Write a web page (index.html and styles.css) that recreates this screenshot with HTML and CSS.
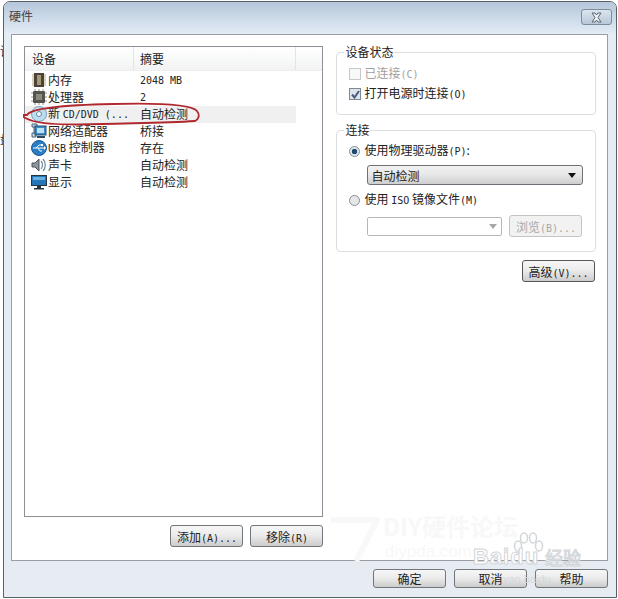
FILE: index.html
```html
<!DOCTYPE html>
<html lang="zh">
<head>
    <meta charset="UTF-8">
    <title>硬件</title>
    <link rel="stylesheet" href="styles.css">
</head>
<body>

    <span class="edge-text edge-one">语</span>
    <span class="edge-text edge-two">盘</span>

    <div class="window">
        <div class="titlebar">
            <span class="title">硬件</span>
            <span class="close">
                <svg width="13" height="11" viewBox="0 0 13 11"><path d="M2 1l3 0 1.500 2 1.500-2 3 0-3 4.500 3 4.500-3 0-1.500-2-1.500 2-3 0 3-4.500z" fill="#eef2f6" stroke="#5c6670"/></svg>
            </span>
        </div>

        <div class="panel">
            <div class="left-col">
                <div class="device-list">
                    <div class="list-head">
                        <span class="col-device">设备</span>
                        <span class="col-summary">摘要</span>
                        <span class="col-rest"></span>
                    </div>
                    <div class="row">
                        <span class="col-device">
                            <svg class="icon" viewBox="0 0 16 16"><rect x="3" y="1" width="10" height="14" fill="#4a4438"/><rect x="6" y="3" width="4" height="10" fill="#a89878"/><path d="M1 3h2M1 5h2M1 7h2M1 9h2M1 11h2M1 13h2M13 3h2M13 5h2M13 7h2M13 9h2M13 11h2M13 13h2" stroke="#b9a878"/></svg>
                            <span class="label">内存</span>
                        </span>
                        <span class="col-summary"><span class="lat">2048 MB</span></span>
                    </div>
                    <div class="row">
                        <span class="col-device">
                            <svg class="icon" viewBox="0 0 16 16"><rect x="2" y="2" width="12" height="12" rx="1" fill="#55554e"/><rect x="5" y="5" width="6" height="6" fill="#8a8a7c"/><path d="M4 0v2M8 0v2M12 0v2M4 14v2M8 14v2M12 14v2M0 4h2M0 8h2M0 12h2M14 4h2M14 8h2M14 12h2" stroke="#98988c"/></svg>
                            <span class="label">处理器</span>
                        </span>
                        <span class="col-summary"><span class="lat">2</span></span>
                    </div>
                    <div class="row row-selected">
                        <span class="col-device">
                            <svg class="icon" viewBox="0 0 16 16"><circle cx="8" cy="8" r="7.500" fill="#bcdcf0" stroke="#7d9fb8"/><path d="M3 5a6 6 0 0 1 5-3v6z" fill="#eaf6fc"/><circle cx="8" cy="8" r="2.500" fill="#f4f8fa" stroke="#5f89a8"/></svg>
                            <span class="label">新 <span class="lat">CD/DVD (...</span></span>
                        </span>
                        <span class="col-summary">自动检测</span>
                    </div>
                    <div class="row">
                        <span class="col-device">
                            <svg class="icon" viewBox="0 0 16 16"><path d="M1 1h5v3H1zM1 10h4v4H1z" fill="#c8d8e4" stroke="#44627c"/><path d="M3 4v6" stroke="#44627c"/><rect x="4" y="3" width="11" height="9" fill="#3a8ccc" stroke="#2a4c68"/><rect x="6" y="5" width="7" height="5" fill="#bfe2f6"/><path d="M6 14h8" stroke="#2a4c68" stroke-width="2"/></svg>
                            <span class="label">网络适配器</span>
                        </span>
                        <span class="col-summary">桥接</span>
                    </div>
                    <div class="row">
                        <span class="col-device">
                            <svg class="icon" viewBox="0 0 16 16"><circle cx="8" cy="8" r="7.500" fill="#2a7cc4" stroke="#1f5c94"/><path d="M2 8h11M5 8l3-3h2M7 8l2 3h2" stroke="#fff" fill="none"/><path d="M13 6l2 2-2 2z" fill="#fff"/><rect x="10" y="4" width="2" height="2" fill="#fff"/></svg>
                            <span class="label"><span class="lat">USB</span> 控制器</span>
                        </span>
                        <span class="col-summary">存在</span>
                    </div>
                    <div class="row">
                        <span class="col-device">
                            <svg class="icon" viewBox="0 0 16 16"><path d="M1 6h3l4-4v12l-4-4H1z" fill="#8a949c" stroke="#4c545c"/><path d="M10 4c2 2 2 6 0 8M12 2c3 3 3 9 0 12" fill="none" stroke="#6a8aa0" stroke-width="1.200"/></svg>
                            <span class="label">声卡</span>
                        </span>
                        <span class="col-summary">自动检测</span>
                    </div>
                    <div class="row">
                        <span class="col-device">
                            <svg class="icon" viewBox="0 0 16 16"><rect x="0.500" y="1.500" width="15" height="10" fill="#2476b8" stroke="#26343e"/><rect x="2" y="3" width="12" height="3" fill="#6ab0e0"/><rect x="6" y="12" width="4" height="2" fill="#26343e"/><rect x="3" y="14" width="10" height="1.500" fill="#26343e"/></svg>
                            <span class="label">显示</span>
                        </span>
                        <span class="col-summary">自动检测</span>
                    </div>
                </div>
                <div class="list-buttons">
                    <button class="btn">添加<span class="lat">(A)...</span></button>
                    <button class="btn">移除<span class="lat">(R)</span></button>
                </div>
            </div>

            <div class="right-col">
                <fieldset class="group group-status">
                    <legend>设备状态</legend>
                    <div class="option option-off"><span class="check"></span><span class="label">已连接<span class="lat">(C)</span></span></div>
                    <div class="option">
                        <span class="check check-on">
                            <svg width="9" height="9" viewBox="0 0 9 9"><path d="M1 4.500l2.500 3L8 1" fill="none" stroke="#4a5a80" stroke-width="2"/></svg>
                        </span>
                        <span class="label">打开电源时连接<span class="lat">(O)</span></span>
                    </div>
                </fieldset>

                <fieldset class="group group-connect">
                    <legend>连接</legend>
                    <div class="option"><span class="radio radio-on"></span><span class="label">使用物理驱动器<span class="lat">(P)</span>:</span></div>
                    <div class="dropdown">
                        <span>自动检测</span>
                        <span class="arrow"></span>
                    </div>
                    <div class="option option-iso"><span class="radio"></span><span class="label">使用 <span class="lat">ISO</span> 镜像文件<span class="lat">(M)</span></span></div>
                    <div class="iso-row">
                        <div class="combo"><span class="arrow arrow-off"></span></div>
                        <button class="btn btn-off">浏览<span class="lat">(B)...</span></button>
                    </div>
                </fieldset>

                <div class="advanced-row">
                    <button class="btn btn-dark">高级<span class="lat">(V)...</span></button>
                </div>
            </div>
        </div>

        <div class="footer">
            <button class="btn btn-wide">确定</button>
            <button class="btn btn-wide">取消</button>
            <button class="btn btn-wide">帮助</button>
        </div>

        <!-- red circle drawn by hand over the cd row -->
        <svg class="red-mark" width="180" height="28" viewBox="0 0 180 28">
            <path d="M4 13C8 6 40 3 90 2c40-1 78 0 84 7 3 4 2 8-2 10-30 2-60 2-92 3-30 1-60 0-70-3-6-2-11-4-10-6z" fill="none" stroke="#b0282e" stroke-width="1.800"/>
        </svg>

        <!-- faint watermark on top of the dialog -->
        <svg class="mark-seven" width="50" height="50" viewBox="0 0 50 50">
            <path d="M1 5h46L26 46" fill="none" stroke="#f8f8f8" stroke-width="6"/>
        </svg>
        <span class="mark-forum">DIY硬件论坛</span>
        <span class="mark-site">diypda.com</span>
        <svg class="mark-paw" width="32" height="34" viewBox="0 0 32 34">
            <g fill="#fff" stroke="#d2d5d8" stroke-width="1.500">
                <ellipse cx="6" cy="14" rx="3.500" ry="5"/>
                <ellipse cx="12" cy="6" rx="3.500" ry="5"/>
                <ellipse cx="21" cy="6" rx="3.500" ry="5"/>
                <ellipse cx="27" cy="14" rx="3.500" ry="5"/>
            </g>
        </svg>
        <span class="mark-baidu">Baidu</span>
        <span class="mark-jy">经验</span>
        <span class="mark-url">yan.baidu</span>
    </div>

</body>
</html>
```

FILE: styles.css
```css
body {
    margin: 0;
    background-color: #fff;
    font-family: "Noto Sans CJK SC", sans-serif;
    font-size: 12px;
    color: #222;
    overflow: hidden;
}

.edge-text {
    position: absolute;
    left: 0;
    font-size: 12px;
    color: #333;
}

.edge-one {
    top: 42px;
}

.edge-two {
    top: 130px;
}

.lat {
    font-family: "DejaVu Sans Mono", monospace;
    font-size: 10px;
}

.label {
    white-space: nowrap;
}

.window {
    position: relative;
    box-sizing: border-box;
    width: 614px;
    height: 597px;
    margin: 1px 0 0 3px;
    border: 1px solid #5a6068;
    border-radius: 7px 7px 0 0;
    background-color: #e4ecf4;
    display: flex;
    flex-direction: column;
}

.titlebar {
    height: 32px;
    padding: 0 4px 0 5px;
    display: flex;
    justify-content: space-between;
    background: linear-gradient(#b6c7da, #d5e1ee 70%, #e4ecf4);
    border-radius: 6px 6px 0 0;
}

.title {
    font-size: 12px;
    line-height: 28px;
    color: #444;
}

.close {
    width: 29px;
    height: 14px;
    margin-top: 7px;
    border: 1px solid #7c8c9c;
    border-radius: 3px;
    background: linear-gradient(#dbe5ef, #b8c8d8);
    display: flex;
    justify-content: center;
    align-items: center;
}

.panel {
    box-sizing: border-box;
    width: 597px;
    height: 527px;
    margin-left: 7px;
    padding: 11px 11px 0 12px;
    border: 1px solid #9a9ea4;
    background-color: #fff;
    display: flex;
    gap: 13px;
}

.left-col {
    width: 300px;
}

.device-list {
    box-sizing: border-box;
    height: 471px;
    border: 1px solid #8c9096;
}

.list-head {
    height: 23px;
    display: flex;
    align-items: center;
    background: linear-gradient(#fff, #f2f3f4);
    border-bottom: 1px solid #eee;
}

.list-head .col-device {
    padding-left: 7px;
    width: 101px;
    height: 100%;
    line-height: 23px;
    border-right: 1px solid #e2e4e6;
}

.list-head .col-summary {
    padding-left: 6px;
    width: 155px;
    height: 100%;
    line-height: 23px;
    border-right: 1px solid #e2e4e6;
}

.row {
    box-sizing: border-box;
    height: 17px;
    width: 271px;
    padding-bottom: 2px;
    display: flex;
    align-items: center;
    line-height: 15px;
}

.row:nth-child(2) {
    margin-top: 1px;
}

.row-selected {
    background-color: #f0f0f0;
}

.row .col-device {
    width: 109px;
    padding-left: 6px;
    box-sizing: border-box;
    display: flex;
    align-items: center;
    gap: 1px;
}

.row .col-summary {
    padding-left: 6px;
}

.icon {
    flex: none;
    width: 16px;
    height: 16px;
}

.list-buttons {
    display: flex;
    justify-content: flex-end;
    gap: 7px;
    margin-top: 8px;
}

.btn {
    box-sizing: border-box;
    width: 73px;
    height: 22px;
    padding: 0;
    font-family: inherit;
    font-size: 12px;
    color: #222;
    border: 1px solid #70767c;
    border-radius: 3px;
    background: linear-gradient(#f6f6f6, #ececec 45%, #cccccc);
}

.btn-off {
    color: #a8a8a8;
    border-color: #c4c4c4;
    background: #f2f2f2;
}

.btn-dark {
    border-color: #555;
}

.right-col {
    width: 260px;
    margin-top: -1px;
}

.group {
    box-sizing: border-box;
    margin: 0;
    padding: 0 0 0 12px;
    border: 1px solid #dcdfe2;
    border-radius: 4px;
}

.group legend {
    padding: 0 1px;
    margin-left: -5px;
    font-size: 12px;
    line-height: 14px;
}

.group-status {
    height: 70px;
    padding-top: 5px;
}

.group-connect {
    height: 129px;
    margin-top: 8px;
    padding-top: 4px;
}

.option {
    height: 20px;
    display: flex;
    align-items: center;
    line-height: 20px;
}

.option-off {
    color: #a0a0a0;
}

.check {
    box-sizing: border-box;
    flex: none;
    width: 12px;
    height: 12px;
    margin-right: 3px;
    border: 1px solid #c8c8c8;
    background-color: #f8f8f8;
}

.check-on {
    border-color: #808890;
    background-color: #e0e4ec;
    display: flex;
    justify-content: center;
    align-items: center;
}

.radio {
    box-sizing: border-box;
    flex: none;
    width: 11px;
    height: 11px;
    margin-right: 4px;
    border: 1px solid #8a9096;
    border-radius: 50%;
    background-color: #e4e6e8;
}

.radio-on {
    background: radial-gradient(circle, #24486a 0 2.500px, #d8e4ee 3px);
}

.dropdown {
    box-sizing: border-box;
    width: 216px;
    height: 20px;
    margin: 4px 0 0 18px;
    padding: 0 6px 0 3px;
    display: flex;
    justify-content: space-between;
    align-items: center;
    border: 1px solid #6c7278;
    border-radius: 3px;
    background: linear-gradient(#f2f2f2, #e8e8e8 45%, #cfcfcf);
}

.arrow {
    width: 0;
    height: 0;
    border-left: 4px solid transparent;
    border-right: 4px solid transparent;
    border-top: 5px solid #111;
}

.arrow-off {
    border-top-color: #a4a8ac;
}

.option-iso {
    margin-top: 5px;
}

.iso-row {
    margin: 5px 0 0 18px;
    display: flex;
    align-items: center;
    gap: 7px;
}

.combo {
    box-sizing: border-box;
    width: 135px;
    height: 19px;
    padding-right: 4px;
    display: flex;
    justify-content: flex-end;
    align-items: center;
    border: 1px solid #b4b8bc;
    border-radius: 2px;
}

.advanced-row {
    display: flex;
    justify-content: flex-end;
    margin-top: 8px;
    padding-right: 1px;
}

.footer {
    flex: 1;
    box-sizing: border-box;
    padding: 8px 8px 0 0;
    display: flex;
    justify-content: flex-end;
    gap: 8px;
    background-color: #e6ecf2;
}

.btn-wide {
    height: 19px;
    line-height: 15px;
}

.red-mark {
    position: absolute;
    left: 19px;
    top: 100px;
}

.mark-seven {
    position: absolute;
    left: 326px;
    top: 513px;
}

.mark-forum {
    position: absolute;
    left: 379px;
    top: 509px;
    font-size: 24px;
    line-height: 30px;
    font-weight: bold;
    color: #f8f8f8;
}

.mark-site {
    position: absolute;
    left: 381px;
    top: 540px;
    font-family: "Liberation Sans", sans-serif;
    font-size: 17px;
    line-height: 20px;
    color: #f8f8f8;
}

.mark-baidu {
    position: absolute;
    left: 469px;
    top: 543px;
    font-family: "Liberation Sans", sans-serif;
    font-size: 22px;
    line-height: 24px;
    font-weight: bold;
    letter-spacing: 1px;
    color: #fff;
    -webkit-text-stroke: 1px #d2d5d8;
}

.mark-paw {
    position: absolute;
    left: 508px;
    top: 530px;
}

.mark-jy {
    position: absolute;
    left: 541px;
    top: 544px;
    font-size: 18px;
    line-height: 22px;
    color: #fff;
    -webkit-text-stroke: 1px #d2d5d8;
}

.mark-url {
    position: absolute;
    left: 499px;
    top: 570px;
    font-family: "Liberation Sans", sans-serif;
    font-size: 11px;
    line-height: 14px;
    color: #d4d8dc;
}
```
